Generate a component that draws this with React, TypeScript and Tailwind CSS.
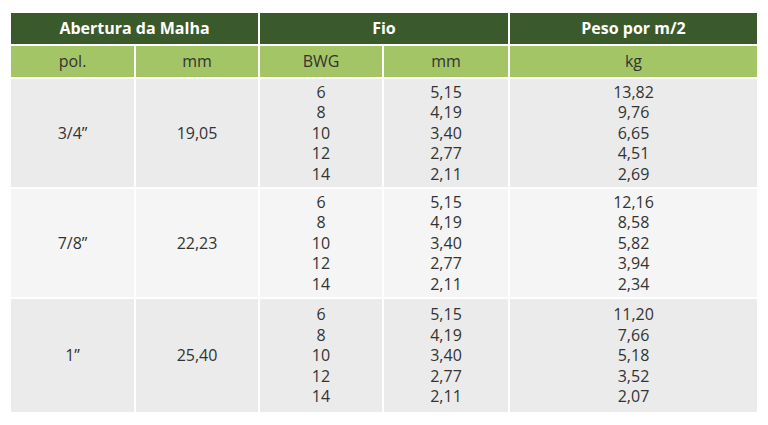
import { Fragment } from 'react';

const groups = [
  {
    pol: '3/4”',
    mm: '19,05',
    fio: ['5,15', '4,19', '3,40', '2,77', '2,11'],
    peso: ['13,82', '9,76', '6,65', '4,51', '2,69'],
    bg: 'bg-[#ebebeb]',
    h: 'h-[108px]',
  },
  {
    pol: '7/8”',
    mm: '22,23',
    fio: ['5,15', '4,19', '3,40', '2,77', '2,11'],
    peso: ['12,16', '8,58', '5,82', '3,94', '2,34'],
    bg: 'bg-[#f5f5f5]',
    h: 'h-[108px]',
  },
  {
    pol: '1”',
    mm: '25,40',
    fio: ['5,15', '4,19', '3,40', '2,77', '2,11'],
    peso: ['11,20', '7,66', '5,18', '3,52', '2,07'],
    bg: 'bg-[#ebebeb]',
    h: 'h-[113px]',
  },
];

const bwg = ['6', '8', '10', '12', '14'];

function Lines({ items }: { items: string[] }) {
  return (
    <div className="flex flex-col items-center">
      {items.map((v, i) => (
        <span key={i}>{v}</span>
      ))}
    </div>
  );
}

export default function App() {
  return (
    <div
      className="w-[768px] h-[425px] bg-white pt-[13px] pl-[11px] text-[#333333] text-[16px] leading-[20.5px]"
      style={{ fontFamily: '"Open Sans", "Noto Sans", sans-serif' }}
    >
      <div className="grid grid-cols-[123px_122px_122px_124px_247px] gap-[2px]">
        <div className="col-span-2 h-[31px] bg-[#3b5a2b] text-white font-bold flex items-center justify-center">
          Abertura da Malha
        </div>
        <div className="col-span-2 h-[31px] bg-[#3b5a2b] text-white font-bold flex items-center justify-center">
          Fio
        </div>
        <div className="h-[31px] bg-[#3b5a2b] text-white font-bold flex items-center justify-center">
          Peso por m/2
        </div>

        {['pol.', 'mm', 'BWG', 'mm', 'kg'].map((t, i) => (
          <div key={i} className="h-[31px] bg-[#a4c566] flex items-center justify-center">
            {t}
          </div>
        ))}

        {groups.map((g, i) => (
          <Fragment key={i}>
            <div className={`${g.h} ${g.bg} flex items-center justify-center`}>{g.pol}</div>
            <div className={`${g.h} ${g.bg} flex items-center justify-center`}>{g.mm}</div>
            <div className={`${g.h} ${g.bg} flex items-center justify-center`}>
              <Lines items={bwg} />
            </div>
            <div className={`${g.h} ${g.bg} flex items-center justify-center`}>
              <Lines items={g.fio} />
            </div>
            <div className={`${g.h} ${g.bg} flex items-center justify-center`}>
              <Lines items={g.peso} />
            </div>
          </Fragment>
        ))}
      </div>
    </div>
  );
}
